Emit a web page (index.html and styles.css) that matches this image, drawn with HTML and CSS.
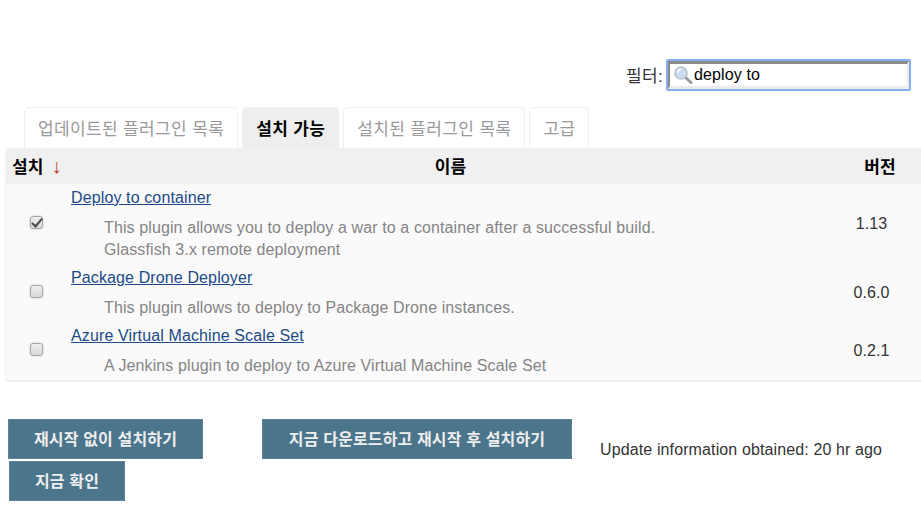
FILE: index.html
```html
<!DOCTYPE html>
<html lang="ko">
<head>
<meta charset="utf-8">
<title>플러그인 관리</title>
<link rel="stylesheet" href="styles.css">
</head>
<body>
<div class="filter-row">
  <label class="filter-label" for="filter">필터:</label>
  <div class="filter-box">
    <svg class="search-icon" width="20" height="20" viewBox="0 0 20 20" aria-hidden="true">
      <line x1="12" y1="12" x2="18" y2="17.5" stroke="#9a9a9a" stroke-width="3" stroke-linecap="round"/>
      <circle cx="8" cy="8" r="6" fill="#c9dcf2" stroke="#bcc0c5" stroke-width="1.6"/>
      <path d="M4.5 7.5a4 4 0 0 1 3.5-3.2" fill="none" stroke="#fff" stroke-width="1.4"/>
    </svg>
    <input id="filter" class="filter-input" type="text" value="deploy to">
  </div>
</div>
<nav class="tabs">
  <a class="tab">업데이트된 플러그인 목록</a>
  <a class="tab tab-active">설치 가능</a>
  <a class="tab">설치된 플러그인 목록</a>
  <a class="tab">고급</a>
</nav>
<table class="plugins">
  <thead>
    <tr>
      <th class="col-install">설치 <span class="sort-arrow">↓</span></th>
      <th class="col-name">이름</th>
      <th class="col-version">버전</th>
    </tr>
  </thead>
  <tbody>
    <tr class="row-tall">
      <td class="cell-check"><input class="check" type="checkbox" checked></td>
      <td class="cell-name">
        <a class="plugin-link" href="#">Deploy to container</a>
        <div class="desc">This plugin allows you to deploy a war to a container after a successful build.<br>Glassfish 3.x remote deployment</div>
      </td>
      <td class="cell-version">1.13</td>
    </tr>
    <tr class="row-short">
      <td class="cell-check"><input class="check" type="checkbox"></td>
      <td class="cell-name">
        <a class="plugin-link" href="#">Package Drone Deployer</a>
        <div class="desc">This plugin allows to deploy to Package Drone instances.</div>
      </td>
      <td class="cell-version">0.6.0</td>
    </tr>
    <tr class="row-short">
      <td class="cell-check"><input class="check" type="checkbox"></td>
      <td class="cell-name">
        <a class="plugin-link" href="#">Azure Virtual Machine Scale Set</a>
        <div class="desc">A Jenkins plugin to deploy to Azure Virtual Machine Scale Set</div>
      </td>
      <td class="cell-version">0.2.1</td>
    </tr>
  </tbody>
</table>
<div class="actions">
  <div class="actions-row">
    <button class="btn btn-install">재시작 없이 설치하기</button>
    <button class="btn btn-restart">지금 다운로드하고 재시작 후 설치하기</button>
    <span class="update-info">Update information obtained: 20 hr ago</span>
  </div>
  <button class="btn btn-check">지금 확인</button>
</div>
</body>
</html>
```
FILE: styles.css
```css
html, body {
  margin: 0;
  padding: 0;
  background: #fff;
  overflow: hidden;
  height: 528px;
}
body {
  font-family: "Liberation Sans", "Noto Sans CJK KR", sans-serif;
  font-size: 16px;
  letter-spacing: .12px;
  color: #333;
}
.filter-row {
  display: flex;
  justify-content: flex-end;
  align-items: center;
  height: 32px;
  margin-top: 59px;
  padding-right: 10px;
  gap: 3px;
}
.filter-label {
  font-size: 17px;
  letter-spacing: .3px;
  margin-bottom: 2px;
  color: #333;
}
.filter-box {
  display: flex;
  align-items: center;
  width: 245px;
  height: 32px;
  box-sizing: border-box;
  border: 2px solid #84aeef;
  border-radius: 2px;
  background: #fff;
  position: relative;
  padding-left: 5px;
}
.filter-box::before {
  content: "";
  position: absolute;
  inset: 0;
  border-top: 3px solid #8a8a8a;
  border-left: 2px solid #8a8a8a;
  border-right: 2px solid #ececec;
  border-bottom: 3px solid #ececec;
  pointer-events: none;
}
.search-icon {
  flex: none;
}
.filter-input {
  flex: 1;
  min-width: 0;
  border: 0;
  outline: 0;
  background: transparent;
  padding: 0 0 0 1px;
  font: 16px "Liberation Sans", sans-serif;
  letter-spacing: .13px;
  color: #000;
}
.tabs {
  display: flex;
  gap: 4px;
  margin-top: 16px;
  padding-left: 24px;
  height: 41px;
}
.tab {
  display: flex;
  align-items: center;
  box-sizing: border-box;
  padding: 0 13px 2px;
  border: 1px solid #eee;
  border-bottom: 0;
  border-radius: 5px 5px 0 0;
  color: #999;
  font-size: 17px;
  letter-spacing: .36px;
}
.tab-active {
  background: #eee;
  border-color: #eee;
  color: #000;
  font-weight: 700;
}
.plugins {
  width: 925px;
  margin-left: 5px;
  border-collapse: separate;
  border-spacing: 0;
  table-layout: fixed;
  background: #fafafa;
  border-bottom: 2px solid #eee;
  border-left: 1px solid #f3f3f3;
  border-radius: 4px;
}
.plugins th {
  padding: 0 0 2px;
  background: #f0f0f0;
  color: #000;
  font-size: 17px;
  letter-spacing: .2px;
  font-weight: 700;
}
.plugins .col-install {
  width: 54px;
  height: 34px;
  text-align: left;
  padding-left: 6px;
  white-space: nowrap;
  border-radius: 4px 0 0 0;
}
.plugins .col-name {
  height: 34px;
  padding-right: 17px;
}
.plugins .col-version {
  width: 56px;
  height: 34px;
  padding-right: 22px;
}
.sort-arrow {
  color: #bd3a2a;
  font-weight: 400;
  font-size: 20px;
  margin-left: 3px;
}
.row-tall {
  height: 80px;
}
.row-short {
  height: 58px;
}
.plugins td {
  padding: 0;
  vertical-align: middle;
}
.check {
  appearance: none;
  display: block;
  margin: 0 auto 4px;
  width: 13px;
  height: 13px;
  border: 1px solid #a6a6a6;
  border-radius: 3px;
  background: linear-gradient(#efefef, #d8d8d8);
  box-shadow: 0 0 2px rgba(0, 0, 0, .25);
  position: relative;
}
.check:checked::after {
  content: "";
  position: absolute;
  left: 3px;
  top: -1px;
  width: 4px;
  height: 9px;
  border: solid #4a4a4a;
  border-width: 0 2px 2px 0;
  transform: rotate(40deg);
}
.plugins .cell-name {
  vertical-align: top;
  padding-left: 5px;
}
.plugin-link {
  display: inline-block;
  margin-top: 4px;
  line-height: 20px;
  color: #204a87;
}
.desc {
  margin-top: 9px;
  padding-left: 33px;
  line-height: 22px;
  letter-spacing: .11px;
  color: #858585;
}
.plugins .cell-version {
  color: #333;
  padding-right: 39px;
  text-align: center;
}
.actions {
  margin-top: 37px;
}
.actions-row {
  display: flex;
  align-items: center;
}
.btn {
  display: block;
  height: 40px;
  box-sizing: border-box;
  padding: 0 0 2px;
  border: 1px solid #5b8197;
  background: #4b758b;
  color: #eee;
  font: 700 16px "Liberation Sans", "Noto Sans CJK KR", sans-serif;
  letter-spacing: .15px;
}
.btn-install {
  width: 195px;
  margin-left: 8px;
}
.btn-restart {
  width: 310px;
  margin-left: 59px;
}
.btn-check {
  width: 116px;
  margin: 2px 0 0 9px;
}
.update-info {
  margin-left: 28px;
  margin-top: 22px;
  color: #333;
}
```
